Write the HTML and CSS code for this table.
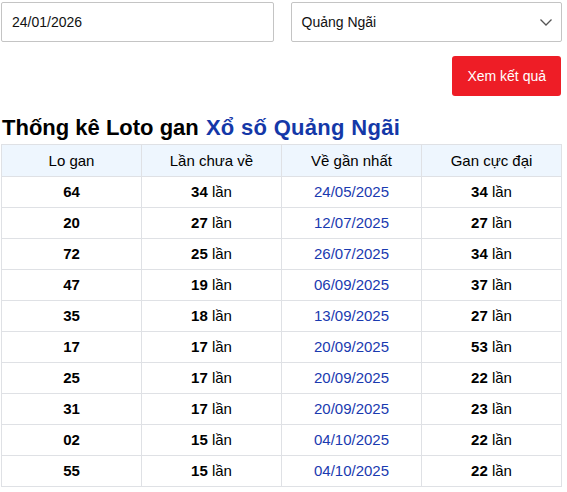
FILE: index.html
```html
<!DOCTYPE html>
<html lang="vi">
<head>
<meta charset="utf-8">
<link rel="stylesheet" href="styles.css">
</head>
<body>
<div class="page">
  <div class="filters">
    <div class="field">24/01/2026</div>
    <div class="field select">
      <span>Quảng Ngãi</span>
      <svg class="chev" width="12" height="7" viewBox="0 0 12 7"><path d="M0.5 0.5 L6 6 L11.5 0.5" fill="none" stroke="#555" stroke-width="1.3"/></svg>
    </div>
  </div>
  <div class="actions">
    <button class="btn">Xem kết quả</button>
  </div>
  <h1 class="title">Thống kê Loto gan <span class="blue">Xổ số Quảng Ngãi</span></h1>
  <table class="stats">
    <thead>
      <tr><th>Lo gan</th><th>Lần chưa về</th><th>Về gần nhất</th><th>Gan cực đại</th></tr>
    </thead>
    <tbody>
      <tr><td><b>64</b></td><td><b>34</b> lần</td><td class="date">24/05/2025</td><td><b>34</b> lần</td></tr>
      <tr><td><b>20</b></td><td><b>27</b> lần</td><td class="date">12/07/2025</td><td><b>27</b> lần</td></tr>
      <tr><td><b>72</b></td><td><b>25</b> lần</td><td class="date">26/07/2025</td><td><b>34</b> lần</td></tr>
      <tr><td><b>47</b></td><td><b>19</b> lần</td><td class="date">06/09/2025</td><td><b>37</b> lần</td></tr>
      <tr><td><b>35</b></td><td><b>18</b> lần</td><td class="date">13/09/2025</td><td><b>27</b> lần</td></tr>
      <tr><td><b>17</b></td><td><b>17</b> lần</td><td class="date">20/09/2025</td><td><b>53</b> lần</td></tr>
      <tr><td><b>25</b></td><td><b>17</b> lần</td><td class="date">20/09/2025</td><td><b>22</b> lần</td></tr>
      <tr><td><b>31</b></td><td><b>17</b> lần</td><td class="date">20/09/2025</td><td><b>23</b> lần</td></tr>
      <tr><td><b>02</b></td><td><b>15</b> lần</td><td class="date">04/10/2025</td><td><b>22</b> lần</td></tr>
      <tr><td><b>55</b></td><td><b>15</b> lần</td><td class="date">04/10/2025</td><td><b>22</b> lần</td></tr>
    </tbody>
  </table>
</div>
</body>
</html>
```
FILE: styles.css
```css
* { box-sizing: border-box; }
html, body { margin: 0; padding: 0; background: #fff; }
body { font-family: "Liberation Sans", Arial, sans-serif; color: #000; }
.page { width: 561px; margin-left: 1px; padding-top: 2px; }
.filters { display: flex; gap: 17px; }
.field {
  flex: 1;
  height: 40px;
  border: 1px solid #c4c4c4;
  border-radius: 2px;
  padding: 0 10px;
  display: flex;
  align-items: center;
  font-size: 14px;
  color: #111;
}
.select { justify-content: space-between; padding-right: 9px; }
.chev { display: block; }
.actions { display: flex; justify-content: flex-end; margin-top: 14px; padding-right: 1px; }
.btn {
  height: 40px;
  padding: 0 15px;
  background: #ee1d26;
  color: #fff;
  border: none;
  border-radius: 3px;
  font-family: "Liberation Sans", Arial, sans-serif;
  font-size: 14px;
}
.title {
  margin: 19px 0 0 1px;
  font-size: 22px;
  line-height: 25px;
  font-weight: bold;
  color: #000;
  height: 29px;
  white-space: nowrap;
}
.blue { color: #1438a8; letter-spacing: 0.3px; margin-left: 1px; }
.stats {
  width: 561px;
  border-collapse: collapse;
  table-layout: fixed;
  font-size: 15px;
}
.stats th, .stats td {
  border: 1px solid #dfe1e5;
  text-align: center;
  padding: 0;
  height: 31px;
  line-height: 18px;
}
.stats th { background: #eef6fe; font-weight: normal; height: 32px; }
.stats b { font-weight: bold; }
.date { color: #1a3ab0; }
```
